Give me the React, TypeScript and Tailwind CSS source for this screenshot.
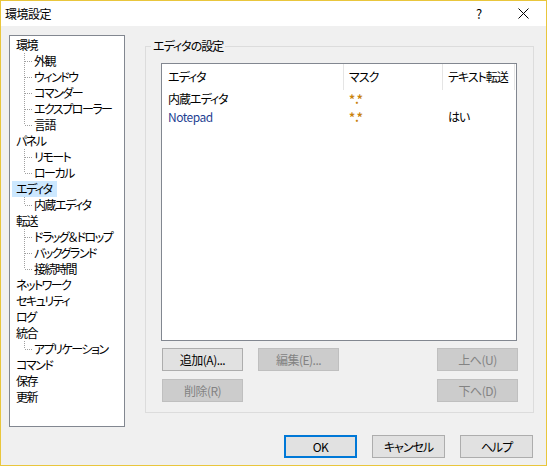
import React from 'react';

interface TreeNode {
  label: string;
  selected?: boolean;
  children?: string[];
}

const tree: TreeNode[] = [
  { label: '環境', children: ['外観', 'ウィンドウ', 'コマンダー', 'エクスプローラー', '言語'] },
  { label: 'パネル', children: ['リモート', 'ローカル'] },
  { label: 'エディタ', selected: true, children: ['内蔵エディタ'] },
  { label: '転送', children: ['ドラッグ＆ドロップ', 'バックグランド', '接続時間'] },
  { label: 'ネットワーク' },
  { label: 'セキュリティ' },
  { label: 'ログ' },
  { label: '統合', children: ['アプリケーション'] },
  { label: 'コマンド' },
  { label: '保存' },
  { label: '更新' },
];

const editors = [
  { name: '内蔵エディタ', mask: '*.*', text: '', builtin: true },
  { name: 'Notepad', mask: '*.*', text: 'はい', builtin: false },
];

const Connector: React.FC<{ last: boolean }> = ({ last }) => (
  <svg width="24" height="16" className="shrink-0" shapeRendering="crispEdges">
    <line x1="14.5" y1="0" x2="14.5" y2={last ? 8 : 16} stroke="#a0a0a0" strokeDasharray="1 1" />
    <line x1="15" y1="8.5" x2="23" y2="8.5" stroke="#a0a0a0" strokeDasharray="1 1" />
  </svg>
);

interface BtnProps {
  label: string;
  disabled?: boolean;
  primary?: boolean;
}

const Btn: React.FC<BtnProps> = ({ label, disabled, primary }) => {
  if (primary) {
    return (
      <div className="flex h-[23px] w-[73px] items-center justify-center border-2 border-[#0078d7] bg-[#e1e1e1] tracking-[-0.5px] text-black">
        {label}
      </div>
    );
  }
  if (disabled) {
    return (
      <div className="flex h-[23px] w-[81px] items-center justify-center border border-[#bfbfbf] bg-[#cccccc] tracking-[-0.5px] text-[#838383]">
        {label}
      </div>
    );
  }
  return (
    <div className="flex h-[23px] w-[81px] items-center justify-center border border-[#adadad] bg-[#e1e1e1] tracking-[-0.5px] text-black">
      {label}
    </div>
  );
};

export default function App() {
  return (
    <div className="flex h-[466px] w-[547px] flex-col border border-[#e9c63c] bg-[#f0f0f0] font-['Noto_Sans_CJK_JP','Noto_Sans',sans-serif] text-[12px] leading-none tracking-[-1px] whitespace-nowrap text-black [font-feature-settings:'palt']">
      {/* title bar */}
      <div className="flex h-[25px] shrink-0 items-center bg-white">
        <span className="ml-[4px] tracking-[-0.5px]">環境設定</span>
        <div className="ml-auto flex h-full">
          <div className="flex w-[45px] items-center justify-center text-[13px]">?</div>
          <div className="flex w-[45px] items-center justify-center">
            <svg width="11" height="11" viewBox="0 0 11 11">
              <path d="M0.5 0.5 L10.5 10.5 M10.5 0.5 L0.5 10.5" stroke="#000" strokeWidth="1" fill="none" />
            </svg>
          </div>
        </div>
      </div>

      {/* body */}
      <div className="flex flex-1 flex-col pl-[8px] pt-[9px]">
        <div className="flex">
          {/* tree */}
          <div className="h-[392px] w-[116px] border border-[#828790] bg-white pt-[1px] tracking-[-1.5px]">
            {tree.map((node) => (
              <div key={node.label}>
                <div className="flex h-4 items-center">
                  <span
                    className={
                      node.selected
                        ? 'ml-[2px] flex h-4 items-center bg-[#cce8ff] pl-[4px] pr-[5px]'
                        : 'ml-[2px] flex h-4 items-center pl-[4px] pr-[5px]'
                    }
                  >
                    {node.label}
                  </span>
                </div>
                {node.children?.map((c, i) => (
                  <div key={c} className="flex h-4 items-center">
                    <Connector last={i === node.children!.length - 1} />
                    <span>{c}</span>
                  </div>
                ))}
              </div>
            ))}
          </div>

          {/* group box */}
          <div className="relative ml-[20px] mt-[11px] h-[367px] w-[389px] border border-[#dcdcdc] pl-[15px] pt-[16px]">
            <span className="absolute left-[5px] top-[-7px] bg-[#f0f0f0] px-[2px]">エディタの設定</span>

            {/* list view */}
            <div className="h-[278px] w-[356px] border border-[#828790] bg-white">
              <div className="flex h-[26px]">
                <div className="flex w-[182px] items-center border-r border-[#e5e5e5] pl-[6px]">エディタ</div>
                <div className="flex w-[99px] items-center border-r border-[#e5e5e5] pl-[5px]">マスク</div>
                <div className="flex w-[72px] items-center border-r border-[#e5e5e5] pl-[5px]">テキスト転送</div>
              </div>
              {editors.map((e) => (
                <div key={e.name} className="flex h-[18px] items-center">
                  <div className={e.builtin ? 'w-[182px] pl-[6px] text-black' : 'w-[182px] pl-[6px] tracking-[-0.5px] text-[#1f3f93]'}>
                    {e.name}
                  </div>
                  <div className="w-[99px] pl-[5px] font-bold tracking-[0px] text-[#c9820e]">{e.mask}</div>
                  <div className="w-[72px] pl-[5px]">{e.text}</div>
                </div>
              ))}
            </div>

            {/* buttons */}
            <div className="ml-[1px] mt-[7px] flex w-[356px] gap-[15px]">
              <Btn label="追加(A)..." />
              <Btn label="編集(E)..." disabled />
              <div className="ml-auto">
                <Btn label="上へ(U)" disabled />
              </div>
            </div>
            <div className="ml-[1px] mt-[8px] flex w-[356px]">
              <Btn label="削除(R)" disabled />
              <div className="ml-auto">
                <Btn label="下へ(D)" disabled />
              </div>
            </div>
          </div>
        </div>

        {/* dialog buttons */}
        <div className="mt-[8px] flex justify-end gap-[15px] pr-[13px]">
          <Btn label="OK" primary />
          <div className="flex h-[23px] w-[73px] items-center justify-center border border-[#adadad] bg-[#e1e1e1]">キャンセル</div>
          <div className="flex h-[23px] w-[73px] items-center justify-center border border-[#adadad] bg-[#e1e1e1]">ヘルプ</div>
        </div>
      </div>
    </div>
  );
}
